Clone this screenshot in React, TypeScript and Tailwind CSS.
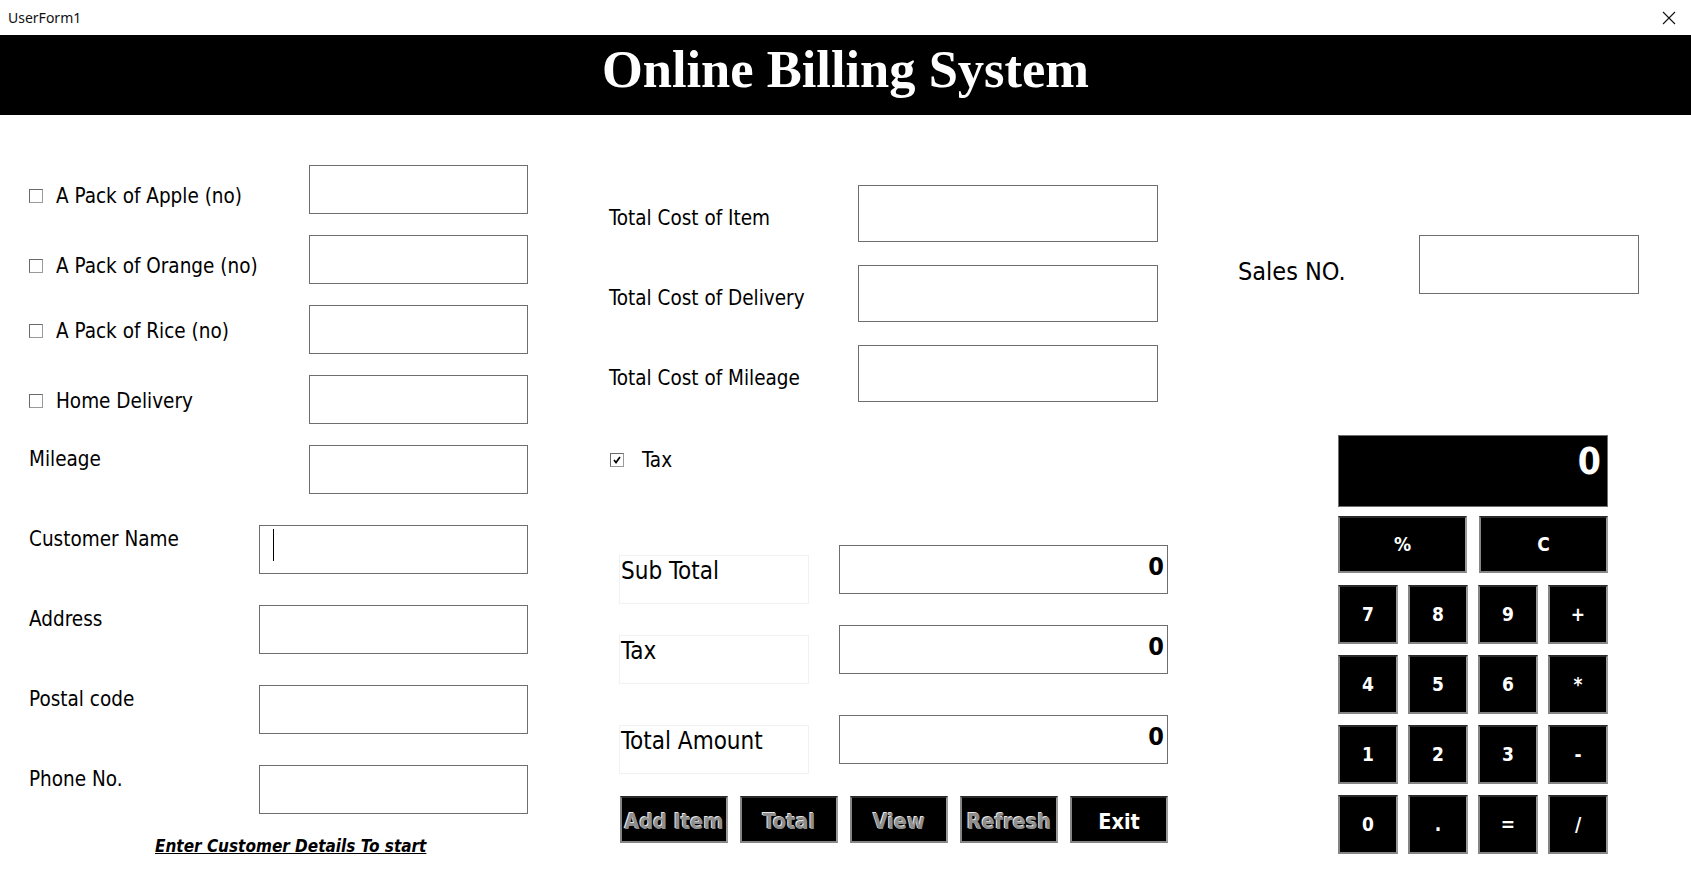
import React from "react";

const ui = "font-['DejaVu_Sans_Condensed','DejaVu_Sans',sans-serif]";

const Box = ({ className = "", children }: { className?: string; children?: React.ReactNode }) => (
  <div className={`border border-[#6e6e6e] bg-white shrink-0 ${className}`}>{children}</div>
);

const Check = ({ checked = false }: { checked?: boolean }) => (
  <div className="w-[14px] h-[14px] border border-[#9a9a9a] border-t-[#6a6a6a] border-l-[#6a6a6a] bg-white flex items-center justify-center shrink-0">
    {checked && (
      <svg width="10" height="10" viewBox="0 0 10 10">
        <path d="M2 5 L4 7.5 L8 2" stroke="#000" strokeWidth="1.7" fill="none" />
      </svg>
    )}
  </div>
);

const itemRows = ["A Pack of Apple (no)", "A Pack of Orange (no)", "A Pack of Rice (no)", "Home Delivery"];
const customerRows = ["Customer Name", "Address", "Postal code", "Phone No."];
const costRows = ["Total Cost of Item", "Total Cost of Delivery", "Total Cost of Mileage"];
const totals = ["Sub Total", "Tax", "Total Amount"];
const actions: { label: string; w: string; white?: boolean }[] = [
  { label: "Add Item", w: "w-[108px]" },
  { label: "Total", w: "w-[98px]" },
  { label: "View", w: "w-[98px]" },
  { label: "Refresh", w: "w-[98px]" },
  { label: "Exit", w: "w-[98px]", white: true },
];
const keys = ["7", "8", "9", "+", "4", "5", "6", "*", "1", "2", "3", "-", "0", ".", "=", "/"];

const bevel = "bg-black border-2 border-[#858585] border-t-[#2a2a2a] border-r-[#9a9a9a]";

export default function App() {
  return (
    <div className={`w-[1691px] h-[882px] bg-white text-black ${ui}`}>
      {/* window title bar */}
      <div className="h-[35px] flex items-center justify-between pl-[8px] pr-[15px]">
        <span className="text-[14px] font-['Noto_Sans',sans-serif] text-[#111]">UserForm1</span>
        <svg width="14" height="14" viewBox="0 0 14 14">
          <path d="M1 1 L13 13 M13 1 L1 13" stroke="#111" strokeWidth="1.1" />
        </svg>
      </div>

      {/* header */}
      <div className="h-[80px] bg-black flex justify-center pt-[3px]">
        <h1 className="font-['Liberation_Serif',serif] font-bold text-white text-[52.5px] leading-[62px]">
          Online Billing System
        </h1>
      </div>

      <div className="flex">
        {/* left column */}
        <div className="w-[609px] shrink-0 pl-[29px] pt-[50px]">
          <div className="flex flex-col gap-[21px]">
            {itemRows.map((t, i) => (
              <div key={t} className="flex items-center h-[49px]">
                <div className={`w-[280px] flex items-center gap-[13px] ${i < 2 ? "pt-[12px]" : "pt-[2px]"}`}>
                  <Check />
                  <span className="text-[20.5px] leading-[24px]">{t}</span>
                </div>
                <Box className="w-[219px] h-[49px]" />
              </div>
            ))}
            <div className="flex items-start h-[49px]">
              <span className="w-[280px] text-[20.5px] leading-[24px] mt-[2px]">Mileage</span>
              <Box className="w-[219px] h-[49px]" />
            </div>
          </div>

          <div className="flex flex-col gap-[31px] mt-[31px]">
            {customerRows.map((t, i) => (
              <div key={t} className="flex items-start h-[49px]">
                <span className="w-[230px] text-[20.5px] leading-[24px] mt-[2px]">{t}</span>
                <Box className="w-[269px] h-[49px] relative">
                  {i === 0 && <div className="absolute left-[13px] top-[3px] w-px h-[32px] bg-black" />}
                </Box>
              </div>
            ))}
          </div>

          <p className="ml-[126px] mt-[22px] text-[17px] leading-[20px] font-bold italic underline">
            Enter Customer Details To start
          </p>
        </div>

        {/* middle column */}
        <div className="w-[629px] shrink-0 pt-[70px]">
          <div className="flex flex-col gap-[23px]">
            {costRows.map((t) => (
              <div key={t} className="flex items-center">
                <span className="w-[249px] text-[20.5px] leading-[24px] pt-[8px]">{t}</span>
                <Box className="w-[300px] h-[57px]" />
              </div>
            ))}
          </div>

          <div className="flex items-center gap-[18px] h-[20px] mt-[48px] pl-[1px]">
            <Check checked />
            <span className="text-[20.5px] leading-[24px]">Tax</span>
          </div>

          <div className="flex flex-col mt-[75px] ml-[10px]">
            {totals.map((t, i) => (
              <div key={t} className={`flex items-start ${i === 1 ? "mt-[21px]" : i === 2 ? "mt-[31px]" : ""}`}>
                <div className="w-[190px] h-[49px] mt-[10px] border border-[#f1f1f1] text-[24px] leading-[30px] pl-[1px]">
                  {t}
                </div>
                <Box className="ml-[30px] w-[329px] h-[49px] flex justify-end pr-[3px] pt-[6px]">
                  <span className="font-bold text-[25px] leading-[30px]">0</span>
                </Box>
              </div>
            ))}
          </div>

          <div className="flex gap-[12px] mt-[22px] ml-[11px]">
            {actions.map((a) => (
              <div
                key={a.label}
                className={`${a.w} h-[47px] ${bevel} flex items-center justify-center pt-[5px] whitespace-nowrap font-bold text-[21.5px] ${
                  a.white ? "text-white" : "text-[#8e8e8e] [text-shadow:-1px_-1px_0_#e6e6e6]"
                }`}
              >
                {a.label}
              </div>
            ))}
          </div>
        </div>

        {/* right column */}
        <div className="flex-1 pt-[120px]">
          <div className="flex items-center">
            <span className="w-[181px] text-[25px] leading-[30px] pt-[14px]">Sales NO.</span>
            <Box className="w-[220px] h-[59px]" />
          </div>

          <div className="ml-[100px] mt-[141px] w-[270px]">
            <div className="h-[72px] bg-black border border-[#6e6e6e] flex justify-end items-start pr-[6px] pt-[4px]">
              <span className="text-white font-bold text-[37px] leading-[44px]">0</span>
            </div>
            <div className="flex justify-between mt-[9px]">
              {["%", "C"].map((k) => (
                <div key={k} className={`w-[129px] h-[57px] ${bevel} flex items-center justify-center text-white font-bold text-[19px]`}>
                  {k}
                </div>
              ))}
            </div>
            <div className="grid grid-cols-4 gap-x-[10px] gap-y-[11px] mt-[12px]">
              {keys.map((k) => (
                <div key={k} className={`h-[59px] ${bevel} flex items-center justify-center text-white font-bold text-[19px]`}>
                  {k}
                </div>
              ))}
            </div>
          </div>
        </div>
      </div>
    </div>
  );
}
